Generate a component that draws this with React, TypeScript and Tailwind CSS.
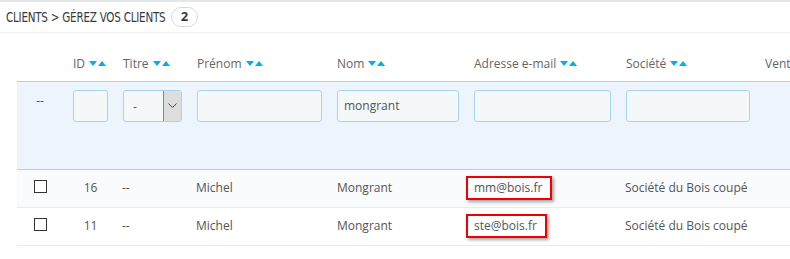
import React from "react";

type Col = { key: string; label: string; width: number; input?: boolean; select?: boolean; value?: string };

const COLUMNS: Col[] = [
  { key: "id", label: "ID", width: 50, input: true },
  { key: "title", label: "Titre", width: 74, select: true },
  { key: "firstname", label: "Prénom", width: 140, input: true },
  { key: "lastname", label: "Nom", width: 137, input: true, value: "mongrant" },
  { key: "email", label: "Adresse e-mail", width: 152, input: true },
  { key: "company", label: "Société", width: 139, input: true },
  { key: "sales", label: "Ventes", width: 90 },
];

const ROWS = [
  { id: 16, title: "--", firstname: "Michel", lastname: "Mongrant", email: "mm@bois.fr", company: "Société du Bois coupé", boxW: "w-[86px]" },
  { id: 11, title: "--", firstname: "Michel", lastname: "Mongrant", email: "ste@bois.fr", company: "Société du Bois coupé", boxW: "w-[81px]" },
];

function SortArrows() {
  return (
    <svg width="17" height="6" viewBox="0 0 17 6" className="inline-block ml-[4px] align-[1px]">
      <polygon points="0,0 8,0 4,5" fill="#00aff0" />
      <polygon points="9,5 17,5 13,0" fill="#00aff0" />
    </svg>
  );
}

export default function App() {
  return (
    <div className="w-[790px] h-[259px] overflow-hidden bg-white font-['Open_Sans',sans-serif] text-[12px] text-[#555]">
      <div className="h-[33px] flex items-center pl-[6px] border-t-2 border-b border-t-[#e4e7e9] border-b-[#eeeeee]">
        {/* condensed title: no condensed face installed, so squeeze it */}
        <div className="w-[155px] shrink-0 whitespace-nowrap overflow-visible">
          <div className="inline-block [transform:scaleX(0.74)] [transform-origin:left_center] font-['DejaVu_Sans',sans-serif] text-[14px] tracking-[-0.3px] text-[#363a41] uppercase">
            Clients &gt; Gérez vos clients
          </div>
        </div>
        <span className="ml-[10px] h-[20px] min-w-[27px] px-[8px] flex items-center justify-center rounded-full border border-[#d6d9dc] text-[13px] font-bold text-[#363a41]">
          2
        </span>
      </div>

      <div className="pl-[17px]">
        <table className="table-fixed border-collapse w-[828px]">
          <colgroup>
            <col className="w-[46px]" />
            {COLUMNS.map((c) => (
              <col key={c.key} style={{ width: c.width }} />
            ))}
          </colgroup>
          <thead>
            <tr className="h-[48px]">
              <th className="align-bottom pb-[8px]" />
              {COLUMNS.map((c) => (
                <th key={c.key} className="align-bottom pb-[8px] pl-[10px] pr-[5px] text-left font-normal text-[#656565] whitespace-nowrap overflow-hidden">
                  {c.label}
                  {c.key !== "sales" && <SortArrows />}
                </th>
              ))}
            </tr>
            <tr className="h-[88px] bg-[#edf4fb] border-y border-[#a7d4ef]">
              <td className="align-top pt-[10px] text-center">--</td>
              {COLUMNS.map((c) => (
                <td key={c.key} className="align-top pt-[8px] pl-[10px] pr-[5px]">
                  {c.input && (
                    <div className="h-[32px] rounded-[3px] border border-[#a7d4ef] bg-[#f5f8f9] flex items-center px-[6px] text-[12px] text-[#555]">
                      {c.value}
                    </div>
                  )}
                  {c.select && (
                    <div className="h-[32px] rounded-[3px] border border-[#a7d4ef] bg-[#f5f8f9] flex items-stretch overflow-hidden">
                      <span className="flex-1 flex items-center pl-[9px] pt-[2px]">-</span>
                      <span className="w-[18px] bg-[#dddddd] border-l border-[#8a8a8a] flex items-center justify-center">
                        <svg width="9" height="6" viewBox="0 0 9 6">
                          <polyline points="0.5,0.5 4.5,4.5 8.5,0.5" fill="none" stroke="#444" strokeWidth="1" />
                        </svg>
                      </span>
                    </div>
                  )}
                </td>
              ))}
            </tr>
          </thead>
          <tbody>
            {ROWS.map((r, i) => (
              <tr key={r.id} className={`h-[38px] border-b border-[#eaedef] ${i === 0 ? "bg-[#fafbfc]" : "bg-white"}`}>
                <td className="text-center align-middle">
                  <span className="inline-block w-[13px] h-[13px] border border-[#333] bg-white align-[-1px]" />
                </td>
                <td className="pl-[10px] pr-[5px] text-center">{r.id}</td>
                <td className="pl-[9px] pr-[5px]">{r.title}</td>
                <td className="pl-[9px] pr-[5px]">{r.firstname}</td>
                <td className="pl-[10px] pr-[5px]">{r.lastname}</td>
                <td className="pl-[2px] pr-[5px]">
                  <span className={`inline-block h-[24px] ${r.boxW} border-2 border-[#ee0000] pl-[6px] leading-[19px] shadow-[2px_2px_3px_rgba(0,0,0,0.35)]`}>
                    {r.email}
                  </span>
                </td>
                <td className="pl-[9px] pr-[5px] whitespace-nowrap">{r.company}</td>
                <td className="pl-[10px]" />
              </tr>
            ))}
          </tbody>
        </table>
      </div>
    </div>
  );
}
